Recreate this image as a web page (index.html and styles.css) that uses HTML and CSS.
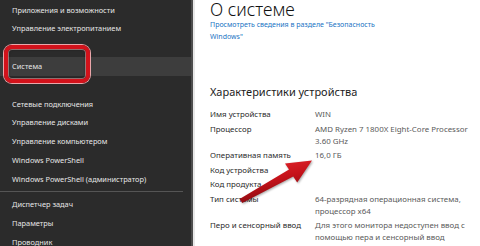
FILE: index.html
```html
<!DOCTYPE html>
<html lang="ru">
<head>
<meta charset="UTF-8">
<meta name="viewport" content="width=device-width, initial-scale=1.0">
<title>О системе</title>
<link rel="stylesheet" href="styles.css">
</head>
<body>
<div class="screen">
    <nav class="winx">
        <ul class="winx-list">
            <li class="winx-item">Приложения и возможности</li>
            <li class="winx-item">Управление электропитанием</li>
            <li class="winx-item"></li>
            <li class="winx-item active">Система</li>
            <li class="winx-item"></li>
            <li class="winx-item">Сетевые подключения</li>
            <li class="winx-item">Управление дисками</li>
            <li class="winx-item">Управление компьютером</li>
            <li class="winx-item">Windows PowerShell</li>
            <li class="winx-item">Windows PowerShell (администратор)</li>
            <li class="winx-sep"></li>
            <li class="winx-item">Диспетчер задач</li>
            <li class="winx-item">Параметры</li>
            <li class="winx-item">Проводник</li>
        </ul>
    </nav>

    <main class="about">
        <h1 class="about-title">О системе</h1>
        <p class="about-link">Просмотреть сведения в разделе "Безопасность<br>Windows"</p>

        <h2 class="about-sub">Характеристики устройства</h2>
        <dl class="specs">
            <div class="spec-row"><dt>Имя устройства</dt><dd>WIN</dd></div>
            <div class="spec-row"><dt>Процессор</dt><dd>AMD Ryzen 7 1800X Eight-Core Processor<br>3.60 GHz</dd></div>
            <div class="spec-row"><dt>Оперативная память</dt><dd>16,0 ГБ</dd></div>
            <div class="spec-row"><dt>Код устройства</dt><dd></dd></div>
            <div class="spec-row"><dt>Код продукта</dt><dd></dd></div>
            <div class="spec-row"><dt>Тип системы</dt><dd>64-разрядная операционная система,<br>процессор x64</dd></div>
            <div class="spec-row"><dt>Перо и сенсорный ввод</dt><dd>Для этого монитора недоступен ввод с<br>помощью пера и сенсорный ввод</dd></div>
        </dl>
    </main>

    <!-- markup drawn over the screenshot -->
    <div class="mark-box"></div>
    <svg class="mark-arrow" width="480" height="246" viewBox="0 0 480 246">
        <defs>
            <linearGradient id="arrowFill" x1="0" y1="0" x2="0.4" y2="1">
                <stop offset="0" stop-color="#ec2a30"/>
                <stop offset="0.55" stop-color="#c4121a"/>
                <stop offset="1" stop-color="#7e0a0e"/>
            </linearGradient>
        </defs>
        <polygon points="312,160.5 285,163.4 289,169.4 239.6,199 242.2,203 293.2,176.4 297.2,182.6" fill="url(#arrowFill)"/>
    </svg>
</div>
</body>
</html>
```

FILE: styles.css
```css
body {
    margin: 0;
    padding: 0;
    font-family: "Noto Sans", "Open Sans", sans-serif;
}
.screen {
    position: relative;
    display: flex;
    width: 480px;
    height: 246px;
    overflow: hidden;
    background-color: #fff;
}
.winx {
    width: 191px;
    flex-shrink: 0;
    background-color: #2b2b2b;
    border-right: 2px solid #4d4d4d;
}
.winx-list {
    list-style: none;
    margin: 0;
    padding: 0.6px 0 0 0;
}
.winx-item {
    height: 18.8px;
    line-height: 18.8px;
    padding-left: 12px;
    font-size: 7.4px;
    color: #e6e6e6;
    white-space: nowrap;
}
.winx-item.active {
    background-color: #3d3d3d;
}
.winx-sep {
    height: 1px;
    margin: 2px 8px 3.6px 0;
    background-color: #555;
}
.about {
    flex: 1;
    border-left: 2px solid #e8e8e8;
    padding-left: 15px;
    color: #222;
}
.about-title {
    margin: 0;
    font-size: 17.5px;
    font-weight: 300;
    line-height: 18px;
    color: #111;
}
.about-link {
    margin: 1px 0 0 0;
    font-size: 7px;
    line-height: 12px;
    color: #1a74c4;
}
.about-sub {
    margin: 41px 0 0 0;
    font-size: 11px;
    font-weight: 400;
    line-height: 16px;
    color: #1c1c1c;
}
.specs {
    margin: 8px 0 0 0;
}
.spec-row {
    display: flex;
    margin-bottom: 2.5px;
    font-size: 7.9px;
    line-height: 12px;
}
.spec-row dt {
    width: 105px;
    flex-shrink: 0;
    color: #2a2a2a;
}
.spec-row dd {
    margin: 0;
    color: #5a5a5a;
    white-space: nowrap;
}
.mark-box {
    position: absolute;
    left: 4px;
    top: 45px;
    width: 78px;
    height: 30px;
    border: 4px solid #d3121b;
    border-radius: 8px;
    box-shadow: 0 0 0 1px #eaa6aa, inset 0 0 0 1px rgba(255, 190, 190, 0.5), inset 0 0 3px rgba(0, 0, 0, 0.6);
}
.mark-arrow {
    position: absolute;
    left: 0;
    top: 0;
    pointer-events: none;
    filter: drop-shadow(1px 1px 1px rgba(0, 0, 0, 0.35));
}
```
